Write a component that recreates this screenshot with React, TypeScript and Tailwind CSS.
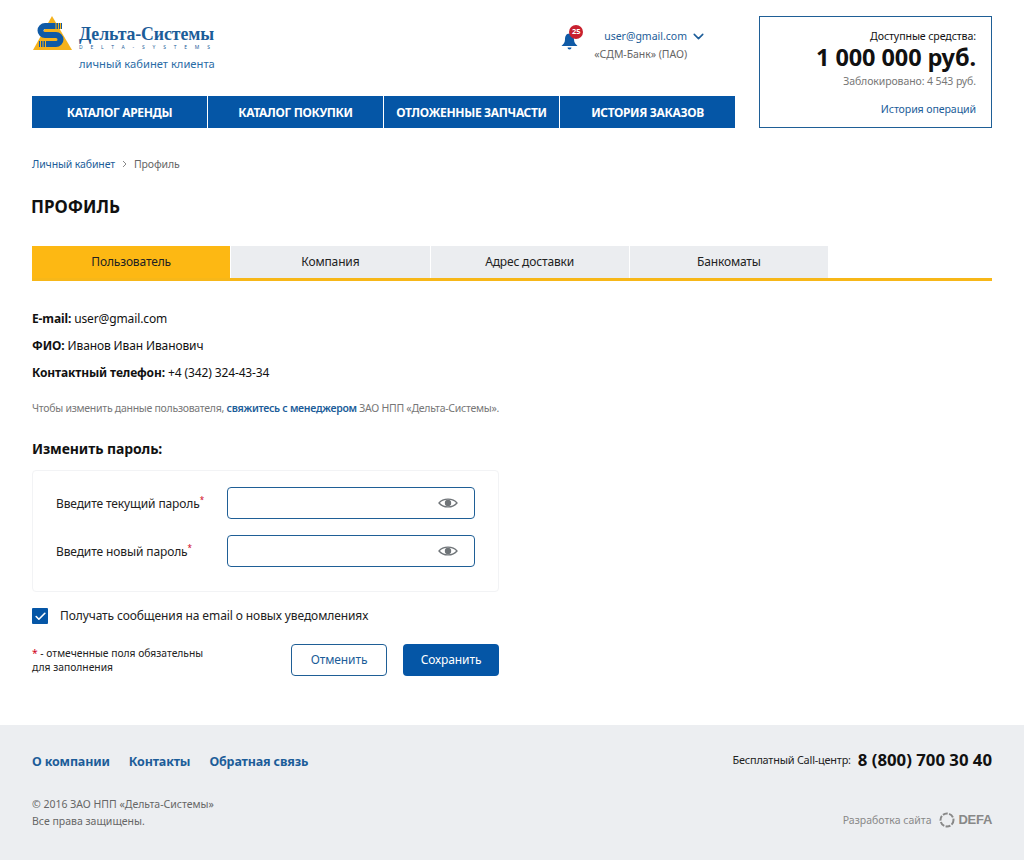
import React from "react";
import { ChevronDown, Check } from "lucide-react";

const font = { fontFamily: '"Noto Sans", "Open Sans", sans-serif' };

const navItems = ["КАТАЛОГ АРЕНДЫ", "КАТАЛОГ ПОКУПКИ", "ОТЛОЖЕННЫЕ ЗАПЧАСТИ", "ИСТОРИЯ ЗАКАЗОВ"];
const tabs = ["Пользователь", "Компания", "Адрес доставки", "Банкоматы"];

function Logo() {
  return (
    <svg width="40" height="36" viewBox="0 0 40 36" className="shrink-0">
      <polygon points="20,0 40,34 1,34" fill="#f5b21c" />
      <path d="M30 10 H13 a4.5 4.5 0 0 0 0 9 H24 a4.5 4.5 0 0 1 0 9 H7" fill="none" stroke="#0f5aa6" strokeWidth="6" />
      <path d="M24 7 V13 M26.5 7 V13 M28.5 7 V13 M8.5 25 V31 M11 25 V31 M13.5 25 V31" stroke="#f5b21c" strokeWidth="1" />
    </svg>
  );
}

function Eye() {
  return (
    <svg width="20" height="12" viewBox="0 0 20 12" className="shrink-0">
      <path d="M1 6 C5 0.8 15 0.8 19 6 C15 11.2 5 11.2 1 6 Z" fill="none" stroke="#6f7478" strokeWidth="1.3" />
      <circle cx="10" cy="6" r="3.2" fill="#6f7478" />
    </svg>
  );
}

function PasswordRow({ label }: { label: string }) {
  return (
    <div className="flex items-center h-8">
      <div className="w-[171px] text-[12px] leading-[16px] pt-[2px] text-[#222] tracking-[-0.12px]">
        {label}
        <span className="text-[#d0021b] text-[8px] leading-[8px] align-top">*</span>
      </div>
      <div className="w-[248px] h-8 border border-[#1f5f96] rounded-[4px] flex items-center justify-end pr-[16px]">
        <Eye />
      </div>
    </div>
  );
}

export default function App() {
  return (
    <div className="w-[1024px] h-[860px] bg-white flex flex-col text-[#111]" style={font}>
      <div className="flex-1 px-8 pt-4">
        <header className="flex justify-between h-28">
          <div className="w-[703px] flex flex-col justify-between">
            <div className="flex justify-between">
              <div className="flex gap-[7px] h-[56px]">
                <Logo />
                <div className="pt-[8px]">
                  <div className="text-[17.8px] leading-[20px] font-bold text-[#1c5d99] tracking-[-0.1px] whitespace-nowrap" style={{ fontFamily: '"Liberation Serif", serif' }}>
                    Дельта-Системы
                  </div>
                  <div className="text-[5px] leading-[6px] tracking-[7.8px] text-[#1c5d99] w-[135px] whitespace-nowrap">DELTA-SYSTEMS</div>
                  <div className="text-[11.2px] leading-[16px] mt-[6px] text-[#2a6ca6]">личный кабинет клиента</div>
                </div>
              </div>
              <div className="flex gap-[17px] mr-[48px] pt-[12px]">
                <div className="relative w-4 h-[26px] mt-[5px]">
                  <svg width="17" height="17" viewBox="0 0 17 16">
                    <path d="M8.5 0 C12 0 13 3 13 6 C13 9 14.5 10.5 16.5 12.5 H0.5 C2.5 10.5 4 9 4 6 C4 3 5 0 8.5 0 Z" fill="#0f5aa6" />
                    <path d="M6.5 14 H10.5 A2 2 0 0 1 6.5 14 Z" fill="#0f5aa6" />
                  </svg>
                  <span className="absolute left-[8px] -top-[8px] w-[14px] h-[14px] rounded-full bg-[#c8202f] text-white text-[7.5px] font-bold flex items-center justify-center">
                    25
                  </span>
                </div>
                <div className="text-[10.5px] leading-[15px]">
                  <div className="flex items-center justify-end text-[#1c5d99]">
                    user@gmail.com
                    <ChevronDown size={17} strokeWidth={2.2} className="text-[#1c5d99] ml-[3px] -mr-[20px]" />
                  </div>
                  <div className="text-[#666] mt-[2px] tracking-[-0.05px] text-right">«СДМ-Банк» (ПАО)</div>
                </div>
              </div>
            </div>
            <nav className="flex gap-px h-8">
              {navItems.map((item) => (
                <div key={item} className="w-[175px] flex-1 bg-[#0556a6] text-white text-[12px] font-bold pt-[1px] flex items-center justify-center whitespace-nowrap tracking-[-0.35px]">
                  {item}
                </div>
              ))}
            </nav>
          </div>
          <div className="w-[233px] border border-[#1f5f96] flex flex-col items-end pt-[11px] pr-[15px] text-right">
            <div className="text-[10.6px] leading-[16px] tracking-[-0.1px]">Доступные средства:</div>
            <div className="text-[23.5px] leading-[24px] font-bold tracking-[-0.1px] mt-[1px] whitespace-nowrap">1 000 000 руб.</div>
            <div className="text-[10.5px] leading-[14px] text-[#777] mt-[5px] tracking-[-0.1px]">Заблокировано: 4 543 руб.</div>
            <div className="text-[10.6px] leading-[16px] text-[#1c5d99] mt-[13px] tracking-[-0.1px]">История операций</div>
          </div>
        </header>

        <div className="flex items-center gap-[7px] mt-[29px] text-[10.5px] leading-[14px] tracking-[-0.12px]">
          <span className="text-[#1c5d99]">Личный кабинет</span>
          <svg width="5" height="8" viewBox="0 0 5 8">
            <path d="M1 1 L4 4 L1 7" fill="none" stroke="#888" strokeWidth="1" />
          </svg>
          <span className="text-[#666]">Профиль</span>
        </div>

        <h1 className="mt-[22px] text-[17px] leading-[28px] font-bold -ml-px">ПРОФИЛЬ</h1>

        <div className="mt-[25px] border-b-[3px] border-[#f7b718] h-[35px]">
          <div className="w-[796px] grid grid-cols-4 gap-px">
            {tabs.map((tab, i) => (
              <div
                key={tab}
                className={
                  i === 0
                    ? "h-8 bg-[#fdb813] text-[12px] tracking-[-0.15px] flex items-center justify-center text-[#222] pb-[1px]"
                    : "h-8 bg-[#ebedf0] text-[12px] tracking-[-0.15px] flex items-center justify-center text-[#222] pb-[1px]"
                }
              >
                {tab}
              </div>
            ))}
          </div>
        </div>

        <div className="mt-[28px] flex flex-col gap-[7px] text-[12px] leading-[20px] tracking-[-0.12px]">
          <div><b>E-mail:</b> user@gmail.com</div>
          <div><b>ФИО:</b> Иванов Иван Иванович</div>
          <div><b>Контактный телефон:</b> +4 (342) 324-43-34</div>
        </div>

        <div className="mt-[17px] text-[10.5px] leading-[16px] text-[#777] tracking-[-0.27px]">
          Чтобы изменить данные пользователя, <span className="text-[#1c5d99] font-semibold">свяжитесь с менеджером</span> ЗАО НПП «Дельта-Системы».
        </div>

        <div className="mt-[23px] text-[14px] leading-[20px] font-bold tracking-[-0.1px]">Изменить пароль:</div>

        <div className="mt-[11px] w-[467px] h-[122px] border border-[#f2f3f5] rounded-[4px] pl-[23px] pt-[16px] flex flex-col gap-4">
          <PasswordRow label="Введите текущий пароль" />
          <PasswordRow label="Введите новый пароль" />
        </div>

        <div className="mt-[16px] flex items-center gap-[12px]">
          <div className="w-4 h-4 bg-[#0556a6] rounded-[1px] flex items-center justify-center">
            <Check size={13} strokeWidth={3} className="text-white" />
          </div>
          <span className="text-[12px] leading-[16px] text-[#222] tracking-[-0.1px]">Получать сообщения на email о новых уведомлениях</span>
        </div>

        <div className="mt-[20px] w-[467px] flex items-center">
          <div className="w-[259px] text-[10.3px] leading-[14px] text-[#222] pb-[1px]">
            <span className="text-[#d0021b]">*</span> - отмеченные поля обязательны
            <br />
            для заполнения
          </div>
          <div className="w-24 h-8 border border-[#1f5f96] rounded-[4px] text-[12px] tracking-[-0.1px] text-[#1c5d99] flex items-center justify-center">
            Отменить
          </div>
          <div className="w-24 h-8 ml-4 bg-[#0556a6] rounded-[4px] text-[12px] tracking-[-0.1px] text-white flex items-center justify-center">
            Сохранить
          </div>
        </div>
      </div>

      <footer className="h-[135px] bg-[#eceef1] px-8 pt-[25px] flex justify-between">
        <div>
          <div className="flex gap-[19px] text-[12.5px] leading-[24px] font-bold text-[#1c5d99] tracking-[-0.15px]">
            <span>О компании</span>
            <span>Контакты</span>
            <span>Обратная связь</span>
          </div>
          <div className="mt-[22px] text-[10.5px] leading-[17px] text-[#666]">
            © 2016 ЗАО НПП «Дельта-Системы»
            <br />
            Все права защищены.
          </div>
        </div>
        <div className="flex flex-col items-end -mt-px">
          <div className="flex items-center gap-[7px] h-[22px]">
            <span className="text-[10.9px] text-[#222] tracking-[-0.2px]">Бесплатный Call-центр:</span>
            <span className="text-[16.75px] font-bold">8 (800) 700 30 40</span>
          </div>
          <div className="mt-[41px] flex items-center gap-[7px] text-[#888]">
            <span className="text-[10.5px] leading-[16px]">Разработка сайта</span>
            <svg width="16" height="16" viewBox="0 0 16 16">
              <circle cx="8" cy="8" r="6.5" fill="none" stroke="#888" strokeWidth="2" strokeDasharray="5 1.4" />
            </svg>
            <span className="text-[13px] leading-[16px] font-bold -ml-[3px] tracking-[-0.3px]" style={{ fontFamily: '"Liberation Sans", sans-serif' }}>DEFA</span>
          </div>
        </div>
      </footer>
    </div>
  );
}
